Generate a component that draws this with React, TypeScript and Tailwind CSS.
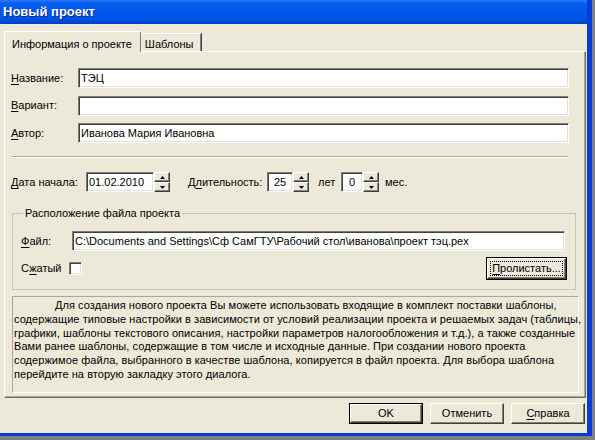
const sunken =
  "bg-white border border-t-[#7f7d76] border-l-[#7f7d76] border-b-white border-r-white shadow-[inset_1px_1px_0_#404040,inset_-1px_-1px_0_#e3e0d5]"
const raised =
  "bg-[#ece9d8] border border-t-white border-l-white border-b-[#404040] border-r-[#404040] shadow-[inset_-1px_-1px_0_#808080]"

const U = ({ children }: { children: string }) => <span className="underline underline-offset-[2px]">{children}</span>

const Field = ({ value, className }: { value: string; className: string }) => (
  <div className={`${sunken} ${className} flex h-[20px] items-center px-[2px] whitespace-nowrap`}>{value}</div>
)

const Arrow = ({ up }: { up: boolean }) => (
  <svg width="5" height="3" viewBox="0 0 5 3">
    <path d={up ? "M2.5 0L5 3H0z" : "M0 0H5L2.5 3z"} fill="#000" />
  </svg>
)

const Spin = () => (
  <div className="flex h-[20px] w-[16px] flex-col">
    <div className={`${raised} flex h-[10px] items-center justify-center`}>
      <Arrow up />
    </div>
    <div className={`${raised} flex h-[10px] items-center justify-center`}>
      <Arrow up={false} />
    </div>
  </div>
)

const Button = ({ label, isDefault }: { label: React.ReactNode; isDefault?: boolean }) => (
  <div className={`${isDefault ? "border border-black" : ""} flex h-[21px] w-[74px]`}>
    <div className={`${raised} flex flex-1 items-center justify-center`}>{label}</div>
  </div>
)

const description = [
  "Для создания нового проекта Вы можете использовать входящие в комплект поставки шаблоны,",
  "содержащие типовые настройки в зависимости от условий реализации проекта и решаемых задач (таблицы,",
  "графики, шаблоны текстового описания, настройки параметров налогообложения и т.д.), а также созданные",
  "Вами ранее шаблоны, содержащие в том числе и исходные данные. При создании нового проекта",
  "содержимое файла, выбранного в качестве шаблона, копируется в файл проекта. Для выбора шаблона",
  "перейдите на вторую закладку этого диалога.",
]

export default function App() {
  return (
    <div className="h-[440px] w-[595px] overflow-hidden bg-[#7f7f7f] font-['Liberation_Sans',Arial,sans-serif] text-[11px] text-black">
      <div className="flex h-[436px] w-[592px] flex-col bg-[#0a3ad8] pr-[5px] pb-[3px]">
        {/* title bar */}
        <div className="flex h-[24px] items-center bg-[linear-gradient(180deg,#2a7cfb_0%,#0860f2_12%,#0058ee_40%,#0054e6_75%,#0048d6_92%,#003cc4_100%)] pl-[3px]">
          <span className="text-[13px] font-bold text-white [text-shadow:1px_1px_0_#0a2a8a]">Новый проект</span>
        </div>

        <div className="flex flex-1 flex-col bg-[#ece9d8]">
          {/* tabs */}
          <div className="mt-[7px] ml-[4px] flex h-[20px] items-end">
            <div className="relative z-10 -mb-[1px] flex h-[21px] items-start border-t border-l border-white bg-[#ece9d8] pt-[4px] pl-[7px] pr-[9px] shadow-[inset_-1px_0_0_#808080]">
              Информация о проекте
            </div>
            <div className="flex h-[18px] items-start border-t border-white bg-[#ece9d8] pt-[2px] pl-[4px] pr-[7px] shadow-[inset_-1px_0_0_#808080,1px_0_0_#404040]">
              Шаблоны
            </div>
          </div>

          {/* panel */}
          <div className="ml-[4px] flex h-[347px] w-[582px] flex-col border border-t-white border-l-white border-b-[#716f64] border-r-[#716f64] shadow-[inset_-1px_-1px_0_#aca899]">
            <div className="mt-[16px] flex flex-col gap-[7.5px] pl-[6px]">
              <div className="flex items-center">
                <span className="w-[67px]"><U>Н</U>азвание:</span>
                <Field value="ТЭЦ" className="w-[491px]" />
              </div>
              <div className="flex items-center">
                <span className="w-[67px]"><U>В</U>ариант:</span>
                <Field value="" className="w-[491px]" />
              </div>
              <div className="flex items-center">
                <span className="w-[67px]"><U>А</U>втор:</span>
                <Field value="Иванова Мария Ивановна" className="w-[491px]" />
              </div>
            </div>

            <div className="mt-[13px] ml-[7px] h-[2px] w-[556px] border-t border-b border-t-[#aca899] border-b-white" />

            <div className="mt-[14px] flex items-center pl-[6px]">
              <span className="w-[75px]"><U>Д</U>ата начала:</span>
              <Field value="01.02.2010" className="w-[68px]" />
              <Spin />
              <span className="ml-[18px] w-[79px]">Д<U>л</U>ительность:</span>
              <Field value="25" className="w-[26px] justify-center" />
              <Spin />
              <span className="ml-[9px] w-[23px]">лет</span>
              <Field value="0" className="w-[22px] justify-center" />
              <Spin />
              <span className="ml-[6px]">мес.</span>
            </div>

            {/* group box */}
            <div className="relative mt-[21px] ml-[7px] flex w-[564px] flex-col border border-[#c9c6b8] pb-[9px] pl-[8px] pr-[8px]">
              <span className="absolute -top-[8px] left-[10px] bg-[#ece9d8] px-[2px] leading-[14px]">Расположение файла проекта</span>
              <div className="mt-[17px] flex items-center">
                <span className="w-[51px]"><U>Ф</U>айл:</span>
                <Field value="C:\Documents and Settings\Сф СамГТУ\Рабочий стол\иванова\проект тэц.pex" className="w-[493px]" />
              </div>
              <div className="mt-[6px] flex h-[23px] items-center">
                <span className="w-[48px]">С<U>ж</U>атый</span>
                <div className={`${sunken} h-[13px] w-[13px]`} />
                <div className="ml-auto flex h-[23px] w-[81px] border border-black">
                  <div className={`${raised} flex flex-1 items-center justify-center`}>
                    <span className="border border-dotted border-black px-[1px] leading-[13px]"><U>П</U>ролистать...</span>
                  </div>
                </div>
              </div>
            </div>

            {/* description */}
            <div className="mt-[6px] ml-[7px] flex h-[97px] w-[567px] flex-col border border-t-[#aca899] border-l-[#aca899] border-b-white border-r-white pt-[2px] pl-[1px] leading-[13.8px] tracking-[0.06px] whitespace-nowrap">
              {description.map((line, i) => (
                <div key={i} className={i === 0 ? "pl-[41px]" : ""}>
                  {line}
                </div>
              ))}
            </div>
          </div>

          {/* buttons */}
          <div className="mt-[5px] flex justify-end gap-[7px] pr-[2px]">
            <Button label="OK" isDefault />
            <Button label="Отменить" />
            <Button label={<><U>С</U>правка</>} />
          </div>
        </div>
      </div>
    </div>
  )
}
